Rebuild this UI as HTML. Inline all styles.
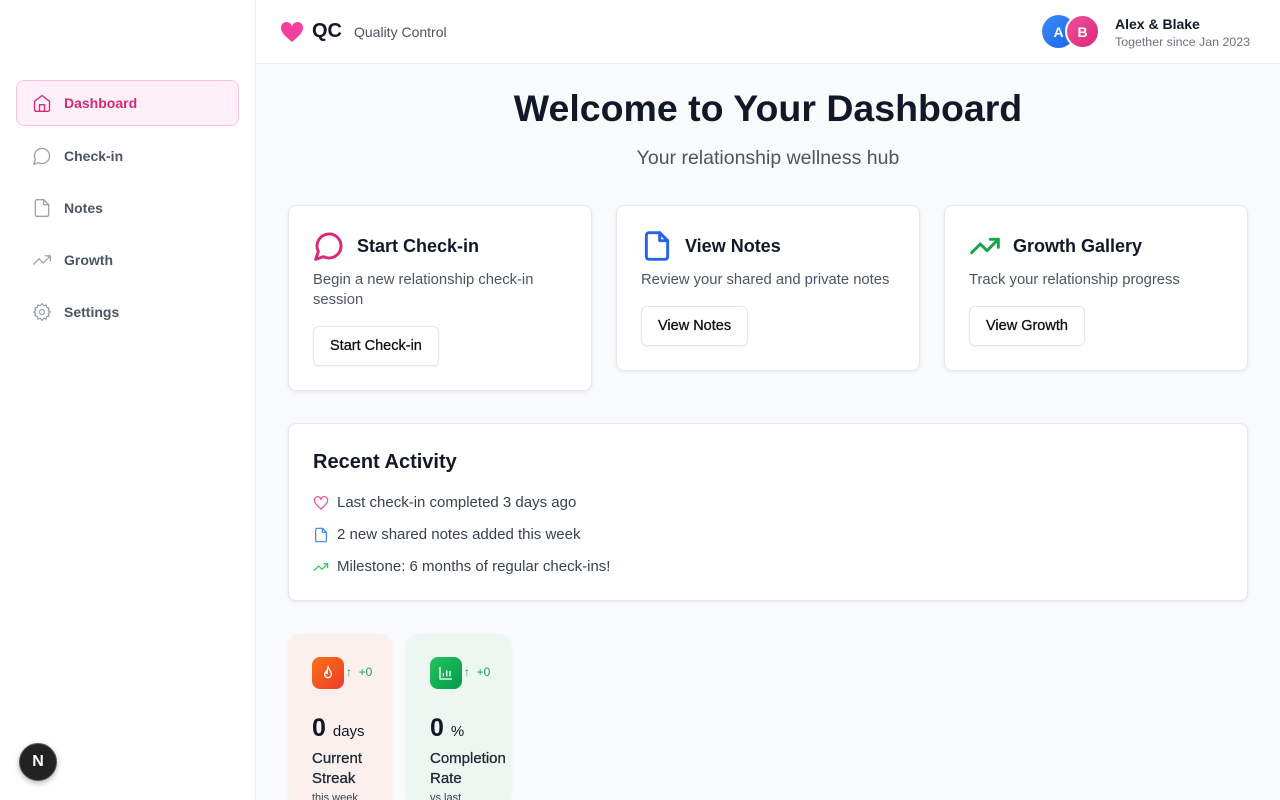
<!DOCTYPE html>
<html><head><meta charset="utf-8"><style>
*{box-sizing:border-box;margin:0;padding:0}
html{width:1280px;height:800px;overflow:hidden}
body{width:1280px;height:800px;overflow:hidden;font-family:"Liberation Sans",sans-serif;background:#f9fafb;color:#111827;position:relative}
.side{position:absolute;left:0;top:0;width:256px;height:800px;background:#fff;border-right:1px solid #eceef1}
.nav{position:absolute;left:16px;width:223px;height:46px;display:flex;align-items:center;padding-left:16px;font-size:14px;font-weight:600;color:#4b5563;gap:12px;border-radius:8px}
.nav.act{background:#fdf0f6;border:1px solid #f9c5dc;color:#db2777;padding-left:15px}
.nav svg{width:20px;height:20px;fill:none;stroke:currentColor;stroke-width:1.6;stroke-linecap:round;stroke-linejoin:round}
.nav:not(.act) svg{stroke:#9ca3af}
.top{position:absolute;left:256px;top:0;right:0;height:64px;background:#fff;border-bottom:1px solid #eef0f3}
.card{position:absolute;background:#fff;border:1px solid #e5e7eb;border-radius:8px;box-shadow:0 1px 3px rgba(0,0,0,.08)}
.ct{position:absolute;left:24px;top:24px;display:flex;align-items:center;gap:12px;font-size:18px;font-weight:700}
.ct svg{width:32px;height:32px;fill:none;stroke-width:2.2;stroke-linecap:round;stroke-linejoin:round}
.cd{position:absolute;left:24px;top:64px;font-size:14.8px;color:#4b5563;line-height:20px;width:260px}
.btn{position:absolute;left:24px;height:40px;padding:0 16px;border:1px solid #e5e7eb;border-radius:6px;background:#fff;font-size:14.5px;font-weight:400;color:#111;display:flex;align-items:center;box-shadow:0 1px 2px rgba(0,0,0,.06);-webkit-text-stroke:.3px #111}
.ra{position:absolute;left:24px;display:flex;align-items:center;gap:8px;font-size:15px;color:#374151}
.ra svg{width:16px;height:16px;fill:none;stroke-width:1.8;stroke-linecap:round;stroke-linejoin:round}
.stat{position:absolute;top:634px;height:170px;border-radius:12px;box-shadow:0 1px 3px rgba(0,0,0,.06);overflow:hidden}
.si{position:absolute;left:24px;top:23px;width:32px;height:32px;border-radius:8px;display:flex;align-items:center;justify-content:center}
.sd{position:absolute;left:58px;top:31px;font-size:12px;color:#16a34a}
.sv{position:absolute;left:24px;top:80px;font-size:25px;font-weight:700}
.sv span{font-size:15px;font-weight:400}
.sl{position:absolute;left:24px;top:115px;font-size:15px;font-weight:400;line-height:20px;color:#1f2937;-webkit-text-stroke:.3px #1f2937}
.ss{position:absolute;left:24px;top:158px;font-size:11px;color:#374151}
</style></head><body>
<div class="side">
 <div class="nav act" style="top:80px"><svg viewBox="0 0 24 24"><path d="M3 10l9-7 9 7v10a2 2 0 0 1-2 2H5a2 2 0 0 1-2-2z"/><path d="M9 22v-8h6v8"/></svg>Dashboard</div>
 <div class="nav" style="top:133px"><svg viewBox="0 0 24 24"><path d="M7.9 20A9 9 0 1 0 4 16.1L2 22z"/></svg>Check-in</div>
 <div class="nav" style="top:185px"><svg viewBox="0 0 24 24"><path d="M14 2H6a2 2 0 0 0-2 2v16a2 2 0 0 0 2 2h12a2 2 0 0 0 2-2V8z"/><path d="M14 2v6h6"/></svg>Notes</div>
 <div class="nav" style="top:237px"><svg viewBox="0 0 24 24"><path d="M22 7l-8.5 8.5-5-5L2 17"/><path d="M16 7h6v6"/></svg>Growth</div>
 <div class="nav" style="top:289px"><svg viewBox="0 0 24 24"><circle cx="12" cy="12" r="3"/><path d="M12 2l2 2.5 3-1 .5 3 3 1-1 3 2.5 1.5-2.5 2 1 3-3 .5-.5 3-3-1L12 22l-2-2.5-3 1-.5-3-3-1 1-3L2 12l2.5-2-1-3 3-.5.5-3 3 1z"/></svg>Settings</div>
 <div style="position:absolute;left:19px;top:743px;width:38px;height:38px;border-radius:50%;background:#222;border:1px solid #555;color:#fff;font-size:16px;font-weight:700;display:flex;align-items:center;justify-content:center;box-shadow:0 2px 6px rgba(0,0,0,.3)">N</div>
</div>
<div class="top">
 <svg style="position:absolute;left:24px;top:21px" width="24" height="22" viewBox="0 0 24 22"><path d="M12 21C5 15 1 11.5 1 7a5.5 5.5 0 0 1 11-1 5.5 5.5 0 0 1 11 1c0 4.5-4 8-11 14z" fill="#f43f9e"/></svg>
 <div style="position:absolute;left:56px;top:20px;font-size:20px;font-weight:700">QC</div>
 <div style="position:absolute;left:98px;top:24px;font-size:14px;color:#4b5563">Quality Control</div>
 <div style="position:absolute;left:786px;top:15px;width:33px;height:33px;border-radius:50%;background:linear-gradient(135deg,#3b8cf6,#1d63f0);color:#fff;font-size:14px;font-weight:600;display:flex;align-items:center;justify-content:center">A</div>
 <div style="position:absolute;left:809px;top:14px;width:35px;height:35px;border-radius:50%;background:linear-gradient(135deg,#f0529c,#db2777);border:2px solid #fff;color:#fff;font-size:14px;font-weight:600;display:flex;align-items:center;justify-content:center">B</div>
 <div style="position:absolute;left:859px;top:16px;font-size:14px;font-weight:600">Alex &amp; Blake</div>
 <div style="position:absolute;left:859px;top:35px;font-size:12.4px;color:#6b7280">Together since Jan 2023</div>
</div>
<div style="position:absolute;left:256px;width:1024px;top:87px;text-align:center;font-size:37.5px;font-weight:700">Welcome to Your Dashboard</div>
<div style="position:absolute;left:256px;width:1024px;top:147px;text-align:center;font-size:19.5px;color:#4b5563">Your relationship wellness hub</div>

<div class="card" style="left:288px;top:205px;width:304px;height:186px">
 <div class="ct"><svg viewBox="0 0 24 24" stroke="#db2777"><path d="M7.9 20A9 9 0 1 0 4 16.1L2 22z"/></svg>Start Check-in</div>
 <div class="cd">Begin a new relationship check-in session</div>
 <div class="btn" style="top:120px">Start Check-in</div>
</div>
<div class="card" style="left:616px;top:205px;width:304px;height:166px">
 <div class="ct"><svg viewBox="0 0 24 24" stroke="#2563eb"><path d="M14 2H6a2 2 0 0 0-2 2v16a2 2 0 0 0 2 2h12a2 2 0 0 0 2-2V8z"/><path d="M14 2v6h6"/></svg>View Notes</div>
 <div class="cd">Review your shared and private notes</div>
 <div class="btn" style="top:100px">View Notes</div>
</div>
<div class="card" style="left:944px;top:205px;width:304px;height:166px">
 <div class="ct"><svg viewBox="0 0 24 24" stroke="#16a34a"><path d="M22 7l-8.5 8.5-5-5L2 17"/><path d="M16 7h6v6"/></svg>Growth Gallery</div>
 <div class="cd">Track your relationship progress</div>
 <div class="btn" style="top:100px">View Growth</div>
</div>

<div class="card" style="left:288px;top:423px;width:960px;height:178px">
 <div style="position:absolute;left:24px;top:27px;font-size:20px;font-weight:600">Recent Activity</div>
 <div class="ra" style="top:70px"><svg viewBox="0 0 24 24" stroke="#ec4899"><path d="M12 21C5 15 2 11.5 2 8a5 5 0 0 1 10-1 5 5 0 0 1 10 1c0 3.5-3 7-10 13z"/></svg>Last check-in completed 3 days ago</div>
 <div class="ra" style="top:102px"><svg viewBox="0 0 24 24" stroke="#3b82f6"><path d="M14 2H6a2 2 0 0 0-2 2v16a2 2 0 0 0 2 2h12a2 2 0 0 0 2-2V8z"/><path d="M14 2v6h6"/></svg>2 new shared notes added this week</div>
 <div class="ra" style="top:134px"><svg viewBox="0 0 24 24" stroke="#22c55e"><path d="M22 7l-8.5 8.5-5-5L2 17"/><path d="M16 7h6v6"/></svg>Milestone: 6 months of regular check-ins!</div>
</div>

<div class="stat" style="left:288px;width:104px;background:#fbf0ee">
 <div class="si" style="background:linear-gradient(135deg,#f97316,#ef3a2a)"><svg width="16" height="16" viewBox="0 0 24 24" fill="none" stroke="#fff" stroke-width="2"><path d="M12 3c1 4 5 6 5 11a5 5 0 0 1-10 0c0-2 1-3 2-4 0 2 1 3 2 3 0-4-1-6 1-10z"/></svg></div>
 <div class="sd">↑&nbsp; +0</div>
 <div class="sv">0 <span>days</span></div>
 <div class="sl">Current<br>Streak</div>
 <div class="ss">this week</div>
</div>
<div class="stat" style="left:406px;width:105px;background:#edf6f1">
 <div class="si" style="background:linear-gradient(135deg,#22c55e,#059a4a)"><svg width="16" height="16" viewBox="0 0 24 24" fill="none" stroke="#fff" stroke-width="2"><path d="M3 3v18h18M8 17v-5M13 17V8M18 17v-8"/></svg></div>
 <div class="sd">↑&nbsp; +0</div>
 <div class="sv">0 <span>%</span></div>
 <div class="sl">Completion<br>Rate</div>
 <div class="ss">vs last</div>
</div>
</body></html>
